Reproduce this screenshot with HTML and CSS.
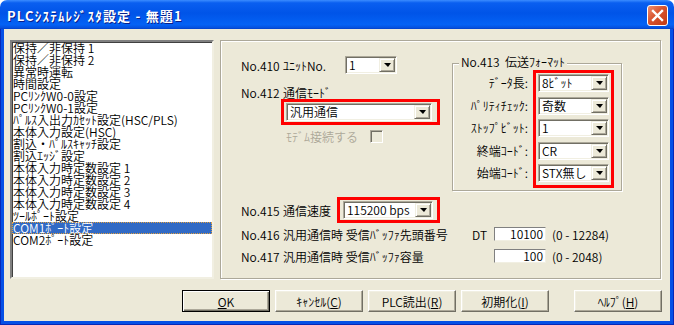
FILE: index.html
```html
<!DOCTYPE html>
<html lang="ja">
<head>
    <meta charset="UTF-8">
    <title>PLCシステムレジスタ設定</title>
    <link rel="stylesheet" href="styles.css">
</head>
<body>
    <div class="window">
        <div class="titlebar">
            <span class="title">PLCｼｽﾃﾑﾚｼﾞｽﾀ設定 - 無題1</span>
            <span class="close">
                <svg width="13" height="13" viewBox="0 0 13 13"><path d="M2 2 L11 11 M11 2 L2 11" stroke="#fff" stroke-width="2.4" stroke-linecap="square"/></svg>
            </span>
        </div>
        <div class="frame">
            <div class="client">
                <div class="main">
                    <ul class="listbox">
                        <li>保持／非保持 1</li>
                        <li>保持／非保持 2</li>
                        <li>異常時運転</li>
                        <li>時間設定</li>
                        <li>PCﾘﾝｸW0-0設定</li>
                        <li>PCﾘﾝｸW0-1設定</li>
                        <li>ﾊﾟﾙｽ入出力ｶｾｯﾄ設定(HSC/PLS)</li>
                        <li>本体入力設定(HSC)</li>
                        <li>割込・ﾊﾟﾙｽｷｬｯﾁ設定</li>
                        <li>割込ｴｯｼﾞ設定</li>
                        <li>本体入力時定数設定 1</li>
                        <li>本体入力時定数設定 2</li>
                        <li>本体入力時定数設定 3</li>
                        <li>本体入力時定数設定 4</li>
                        <li>ﾂｰﾙﾎﾟｰﾄ設定</li>
                        <li class="selected">COM1ﾎﾟｰﾄ設定</li>
                        <li>COM2ﾎﾟｰﾄ設定</li>
                    </ul>

                    <div class="panel">
                        <div class="top">
                            <div class="left">
                                <div class="row">
                                    <span class="no">No.410</span>
                                    <span class="name w62">ﾕﾆｯﾄNo.</span>
                                    <div class="combo w52"><span class="value">1</span><span class="drop"></span></div>
                                </div>
                                <div class="row row-text">
                                    <span class="no">No.412</span>
                                    <span class="name">通信ﾓｰﾄﾞ</span>
                                </div>
                                <div class="mark mark-mode">
                                    <div class="combo w146"><span class="value">汎用通信</span><span class="drop"></span></div>
                                </div>
                                <div class="modem">
                                    <span class="disabled">ﾓﾃﾞﾑ接続する</span>
                                    <span class="check"></span>
                                </div>
                            </div>

                            <div class="group">
                                <span class="group-title">No.413&nbsp; 伝送ﾌｫｰﾏｯﾄ</span>
                                <div class="labels">
                                    <span>ﾃﾞｰﾀ長:</span>
                                    <span>ﾊﾟﾘﾃｨﾁｪｯｸ:</span>
                                    <span>ｽﾄｯﾌﾟﾋﾞｯﾄ:</span>
                                    <span>終端ｺｰﾄﾞ:</span>
                                    <span>始端ｺｰﾄﾞ:</span>
                                </div>
                                <div class="mark mark-format">
                                    <div class="combo w71"><span class="value">8ﾋﾞｯﾄ</span><span class="drop"></span></div>
                                    <div class="combo w71"><span class="value">奇数</span><span class="drop"></span></div>
                                    <div class="combo w71"><span class="value">1</span><span class="drop"></span></div>
                                    <div class="combo w71"><span class="value">CR</span><span class="drop"></span></div>
                                    <div class="combo w71"><span class="value">STX無し</span><span class="drop"></span></div>
                                </div>
                            </div>
                        </div>

                        <div class="row row-speed">
                            <span class="no">No.415</span>
                            <span class="name w54">通信速度</span>
                            <div class="mark mark-speed">
                                <div class="combo w90"><span class="value">115200 bps</span><span class="drop"></span></div>
                            </div>
                        </div>
                        <div class="row row-buf">
                            <span class="no">No.416</span>
                            <span class="name w189">汎用通信時 受信ﾊﾞｯﾌｧ先頭番号</span>
                            <span class="dt">DT</span>
                            <span class="num">10100</span>
                            <span class="range">(0 - 12284)</span>
                        </div>
                        <div class="row row-buf">
                            <span class="no">No.417</span>
                            <span class="name w189">汎用通信時 受信ﾊﾞｯﾌｧ容量</span>
                            <span class="dt"></span>
                            <span class="num">100</span>
                            <span class="range">(0 - 2048)</span>
                        </div>
                    </div>
                </div>

                <div class="buttons">
                    <button class="default"><u>O</u>K</button>
                    <button>ｷｬﾝｾﾙ(<u>C</u>)</button>
                    <button>PLC読出(<u>R</u>)</button>
                    <button>初期化(<u>I</u>)</button>
                    <button class="help">ﾍﾙﾌﾟ(<u>H</u>)</button>
                </div>
            </div>
        </div>
    </div>
</body>
</html>
```

FILE: styles.css
```css
body {
    margin: 0;
    background-color: #fff;
    font-family: "Noto Sans CJK JP", "Liberation Sans", sans-serif;
    font-size: 12px;
    font-weight: 350;
    color: #000;
}

.window {
    width: 674px;
    height: 325px;
    display: flex;
    flex-direction: column;
}

/* title bar */
.titlebar {
    height: 29px;
    box-sizing: border-box;
    display: flex;
    align-items: center;
    justify-content: space-between;
    padding: 1px 6px 0 7px;
    border-radius: 7px 7px 0 0;
    background: linear-gradient(to bottom, #3b8cff 0%, #0a5ff0 10%, #0054e8 45%, #0462f5 85%, #0552e0 95%, #0340c8 100%);
}

.title {
    color: #fff;
    font-weight: bold;
    font-size: 13px;
    letter-spacing: 1.2px;
    text-shadow: 1px 1px #0a1e8a;
}

.close {
    width: 21px;
    height: 21px;
    box-sizing: border-box;
    display: flex;
    align-items: center;
    justify-content: center;
    border: 1px solid #fff;
    border-radius: 3px;
    background: linear-gradient(135deg, #ee8f70 0%, #d8532e 45%, #c23a14 100%);
}

.frame {
    flex: 1;
    display: flex;
    padding: 0 4px 4px 4px;
    background-color: #0550e6;
    box-shadow: inset 1px 0 #0628b8, inset -1px 0 #0628b8, inset 0 -1px #0628b8;
}

.client {
    flex: 1;
    background-color: #ece9d8;
    padding: 11px 8px 0 6px;
}

.main {
    display: flex;
    gap: 6px;
    height: 239px;
}

/* list box */
.listbox {
    width: 204px;
    box-sizing: border-box;
    margin: 0;
    padding: 0;
    list-style: none;
    background-color: #fff;
    border-style: solid;
    border-width: 2px;
    border-color: #808080 #f1efe2 #f1efe2 #808080;
    box-shadow: inset 1px 1px #404040;
}

.listbox li {
    height: 12px;
    line-height: 12px;
    padding-left: 1px;
    white-space: nowrap;
}

.listbox li.selected {
    background-color: #316ac5;
    color: #fff;
    outline: 1px dotted #e0a040;
    outline-offset: -1px;
}

/* right panel */
.panel {
    width: 441px;
    box-sizing: border-box;
    border: 1px solid #aca899;
    box-shadow: inset 1px 1px #fff, 1px 1px #fff;
    padding: 15px 0 0 20px;
}

.top {
    display: flex;
    align-items: flex-start;
}

.left {
    width: 211px;
}

.row {
    display: flex;
    align-items: center;
    height: 18px;
}

.row-text {
    height: 12px;
    margin-top: 12px;
}

.no {
    width: 42px;
    flex-shrink: 0;
}

.name {
    white-space: nowrap;
}

.w62 { width: 62px; }
.w54 { width: 54px; }
.w189 { width: 189px; }

.mark {
    border: 3px solid #f00;
}

.mark-mode {
    width: 159px;
    box-sizing: border-box;
    margin: 1px 0 0 40px;
    padding: 1px 4px 1px 2px;
}

.modem {
    display: flex;
    align-items: center;
    margin: 5px 0 0 45px;
    height: 12px;
}

.disabled {
    color: #aca899;
}

.check {
    width: 13px;
    height: 13px;
    box-sizing: border-box;
    margin-left: 12px;
    border: 1px solid;
    border-color: #aca899 #fff #fff #aca899;
    box-shadow: inset 1px 1px #716f64;
}

/* combo boxes */
.combo {
    height: 18px;
    box-sizing: border-box;
    display: flex;
    align-items: center;
    background-color: #fff;
    border: 1px solid;
    border-color: #aca899 #fff #fff #aca899;
    box-shadow: inset 1px 1px #716f64, inset -1px -1px #f1efe2;
    padding: 1px;
}

.w52 { width: 52px; }
.w71 { width: 71px; }
.w90 { width: 90px; }
.w146 { width: 146px; }

.combo .value {
    flex: 1;
    line-height: 14px;
    padding-left: 2px;
    white-space: nowrap;
}

.combo .drop {
    width: 16px;
    height: 14px;
    box-sizing: border-box;
    display: flex;
    align-items: center;
    justify-content: center;
    background-color: #ece9d8;
    border: 1px solid;
    border-color: #f1efe2 #716f64 #716f64 #f1efe2;
    box-shadow: inset 1px 1px #fff, inset -1px -1px #aca899;
}

.combo .drop::after {
    content: "";
    border-top: 4px solid #000;
    border-left: 4px solid transparent;
    border-right: 3px solid transparent;
}

/* group box */
.group {
    position: relative;
    width: 170px;
    box-sizing: border-box;
    margin-top: 7px;
    display: flex;
    padding: 6px 0 2px 0;
    border: 1px solid #aca899;
    box-shadow: inset 1px 1px #fff, 1px 1px #fff;
}

.group-title {
    position: absolute;
    top: -8px;
    left: 6px;
    padding: 0 2px;
    line-height: 12px;
    background-color: #ece9d8;
    white-space: nowrap;
}

.labels {
    width: 75px;
    margin-right: 5px;
    padding-top: 4px;
    display: flex;
    flex-direction: column;
    align-items: flex-end;
    gap: 4.5px;
}

.labels span {
    height: 18px;
    line-height: 18px;
    white-space: nowrap;
}

.mark-format {
    display: flex;
    flex-direction: column;
    gap: 4.5px;
    padding: 1px 2px 3px 2px;
}

/* bottom rows */
.row-speed {
    height: auto;
    margin-top: 6px;
}

.mark-speed {
    padding: 1px 4px 1px 3px;
}

.row-buf {
    height: 22px;
}

.dt {
    width: 22px;
}

.num {
    width: 52px;
    height: 14px;
    box-sizing: border-box;
    line-height: 12px;
    text-align: right;
    padding-right: 2px;
    background-color: #fff;
    border: 1px solid;
    border-color: #808080 #f1efe2 #f1efe2 #808080;
}

.range {
    margin-left: 6px;
}

/* buttons */
.buttons {
    display: flex;
    justify-content: flex-end;
    gap: 5px;
    margin-top: 11px;
}

button {
    width: 88px;
    height: 22px;
    box-sizing: border-box;
    padding: 0;
    font-family: inherit;
    font-size: 12px;
    font-weight: 350;
    color: #000;
    background-color: #ece9d8;
    border: 1px solid;
    border-color: #fff #716f64 #716f64 #fff;
    box-shadow: inset -1px -1px #aca899, inset 1px 1px #f1efe2;
}

button.default {
    border: 1px solid #000;
    box-shadow: inset 1px 1px #fff, inset -1px -1px #716f64, inset -2px -2px #aca899;
}

button.help {
    margin-left: 20px;
}
```
